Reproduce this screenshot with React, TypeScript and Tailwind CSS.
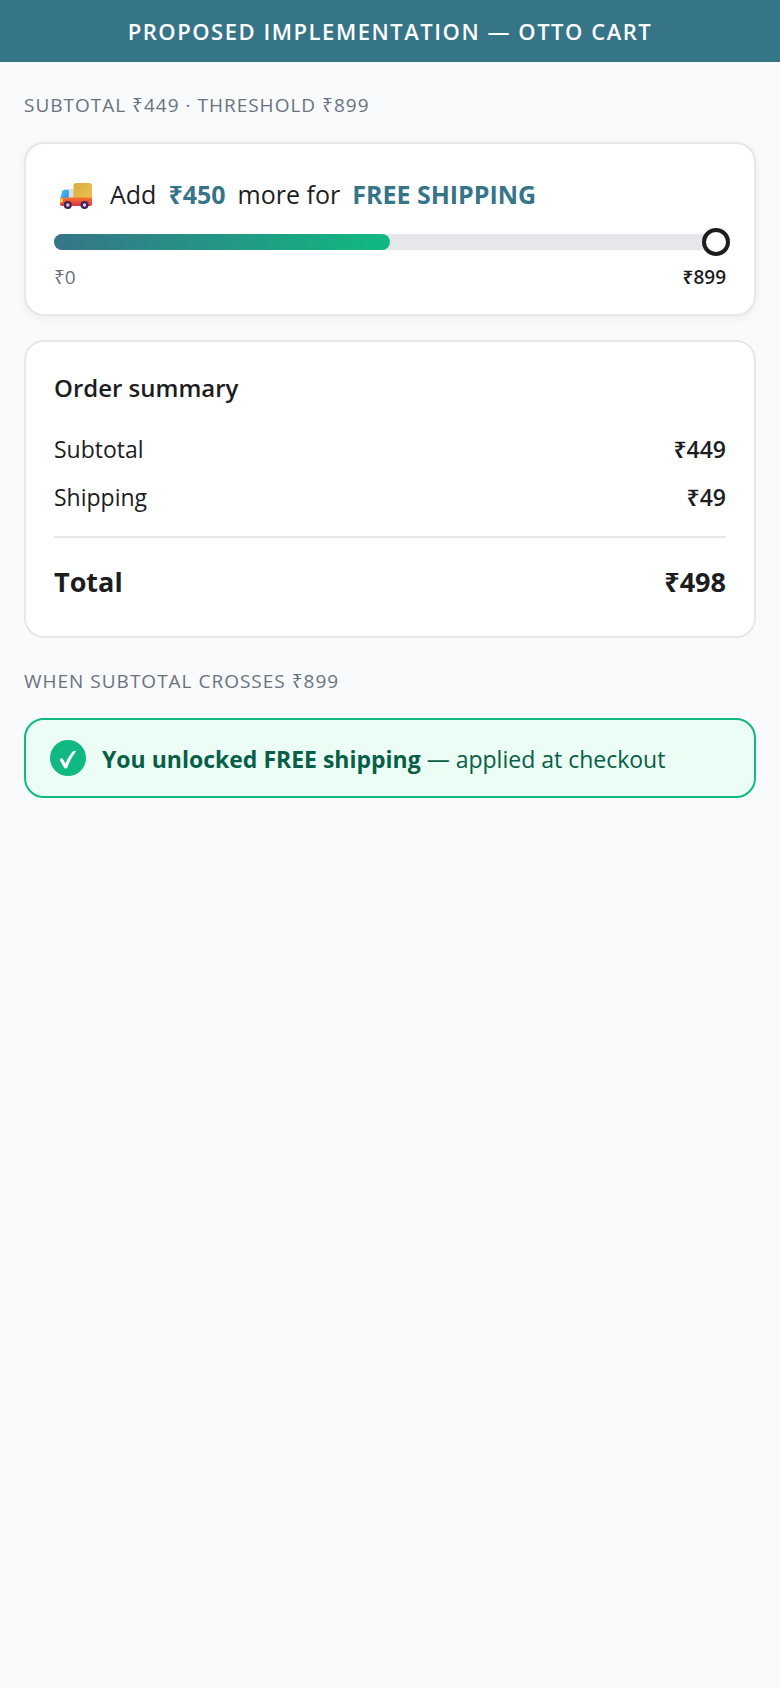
import type { ReactNode } from "react";

function TruckIcon() {
  return (
    <svg viewBox="0 0 44 36" className="mt-1 h-9 w-11 shrink-0" aria-hidden="true">
      <defs>
        <linearGradient id="cargo" x1="0" y1="0" x2="1" y2="1">
          <stop offset="0" stopColor="#d6ae3c" />
          <stop offset="1" stopColor="#efc257" />
        </linearGradient>
        <linearGradient id="base" x1="0" y1="0" x2="0" y2="1">
          <stop offset="0" stopColor="#f8772b" />
          <stop offset="1" stopColor="#e0304a" />
        </linearGradient>
        <linearGradient id="glass" x1="0" y1="0" x2="1" y2="1">
          <stop offset="0" stopColor="#3fc4f5" />
          <stop offset="1" stopColor="#3a8fe0" />
        </linearGradient>
      </defs>
      <path d="M10 11h10v10H6.300z" fill="#dfdbe9" />
      <rect x="19.500" y="5" width="18.500" height="18" rx="2.600" fill="url(#cargo)" />
      <path d="M6.300 19.500h31.700v6.500a2 2 0 0 1-2 2H8a2 2 0 0 1-2-2v-5z" fill="url(#base)" />
      <path d="M9.600 12h5.200v6.800a1 1 0 0 1-1 1H6.600l1.500-6.500a1.700 1.700 0 0 1 1.500-1.300z" fill="url(#glass)" />
      <path d="M6.200 20.500h1.600a1 1 0 0 1 1 1v2a1 1 0 0 1-1 1H6z" fill="#ffd54a" />
      <circle cx="13.800" cy="27" r="4" fill="#41264f" />
      <circle cx="30.500" cy="27" r="4" fill="#41264f" />
      <circle cx="13.800" cy="27" r="1.700" fill="#d9cdee" />
      <circle cx="30.500" cy="27" r="1.700" fill="#d9cdee" />
    </svg>
  );
}

function CheckBadge() {
  return (
    <svg viewBox="0 0 36 36" className="size-9 shrink-0" aria-hidden="true">
      <circle cx="18" cy="18" r="18" fill="#10b981" />
      <path
        d="M10 20.300c-.4-.8.300-1.700 1.200-1.900.8-.2 1.500.1 1.900.9l2.300 4.300c2-4.700 4.600-8.800 7.400-12 .6-.7 3.500-.9 3.200-.2-3.600 4.400-6.300 9.300-8.200 15.200-.4 1.300-1.100 1.900-2.100 1.900-1.100 0-1.600-.6-2-1.500z"
        fill="#fff"
      />
    </svg>
  );
}

function SectionLabel({ children }: { children: ReactNode }) {
  return (
    <h2 className="pt-0.5 text-[19px] leading-[26px] tracking-[1px] text-[#6b7280] uppercase">
      {children}
    </h2>
  );
}

function ShippingProgress({ subtotal, threshold }: { subtotal: number; threshold: number }) {
  const percent = Math.round((subtotal / threshold) * 100);
  return (
    <section className="rounded-[20px] border-2 border-[#e5e7eb] bg-white px-7 py-6 shadow-[0_2px_8px_rgba(0,0,0,0.06)]">
      <p className="flex min-h-[50px] flex-wrap items-center gap-3 pt-0.5 text-[25px] leading-9">
        <TruckIcon />
        <span>Add</span>
        <strong className="font-bold text-[#367588]">₹{threshold - subtotal}</strong>
        <span>more for</span>
        <strong className="font-bold text-[#367588]">FREE SHIPPING</strong>
      </p>
      <div
        role="progressbar"
        aria-label="Progress to free shipping"
        aria-valuemin={0}
        aria-valuemax={threshold}
        aria-valuenow={subtotal}
        className="relative mt-4 h-4 rounded-full bg-[#e5e7eb]"
      >
        <div
          className="h-full rounded-full bg-[linear-gradient(90deg,#367588,#10b981)]"
          style={{ width: `${percent}%` }}
        />
        <span className="absolute -top-1.5 -right-1 size-7 rounded-full border-4 border-[#1d1d1f] bg-white" />
      </div>
      <div className="mt-3.5 flex justify-between text-[19px] leading-[26px]">
        <span className="text-[#6b7280]">₹0</span>
        <span className="font-semibold">₹{threshold}</span>
      </div>
    </section>
  );
}

function SummaryRow({ label, amount }: { label: string; amount: number }) {
  return (
    <div className="flex justify-between pt-[9px] pb-[7px] text-[23px] leading-8">
      <dt>{label}</dt>
      <dd className="font-semibold">₹{amount}</dd>
    </div>
  );
}

function OrderSummary({ subtotal, shipping }: { subtotal: number; shipping: number }) {
  return (
    <section className="rounded-[20px] border-2 border-[#e5e7eb] bg-white p-7">
      <h3 className="mb-[18px] text-2xl leading-9 font-semibold">Order summary</h3>
      <dl>
        <SummaryRow label="Subtotal" amount={subtotal} />
        <SummaryRow label="Shipping" amount={shipping} />
        <div className="mt-4 flex justify-between border-t-2 border-[#e5e7eb] pt-[26px] pb-2 text-[27px] leading-9 font-bold">
          <dt>Total</dt>
          <dd>₹{subtotal + shipping}</dd>
        </div>
      </dl>
    </section>
  );
}

export default function App() {
  return (
    <div className="min-h-screen bg-[#f8fafc] font-['Open_Sans','Noto_Sans',sans-serif] text-[#1d1d1f]">
      <header className="bg-[#367588] px-6 py-4 text-center">
        <h1 className="text-[22px] leading-[30px] font-semibold tracking-[0.07em] text-white uppercase">
          Proposed implementation — Otto cart
        </h1>
      </header>
      <main className="flex flex-col gap-6 px-6 pt-7 pb-6">
        <SectionLabel>Subtotal ₹449 · Threshold ₹899</SectionLabel>
        <ShippingProgress subtotal={449} threshold={899} />
        <OrderSummary subtotal={449} shipping={49} />
        <div className="flex flex-col gap-6 pt-1">
          <SectionLabel>When subtotal crosses ₹899</SectionLabel>
          <div
            role="status"
            className="flex items-center gap-4 rounded-[20px] border-2 border-[#10b981] bg-[#ecfdf5] px-6 py-5 text-[23px] text-[#065f46]"
          >
            <CheckBadge />
            <p className="pt-0.5 leading-[34px]">
              <strong className="font-bold">You unlocked FREE shipping</strong> — applied at checkout
            </p>
          </div>
        </div>
      </main>
    </div>
  );
}
